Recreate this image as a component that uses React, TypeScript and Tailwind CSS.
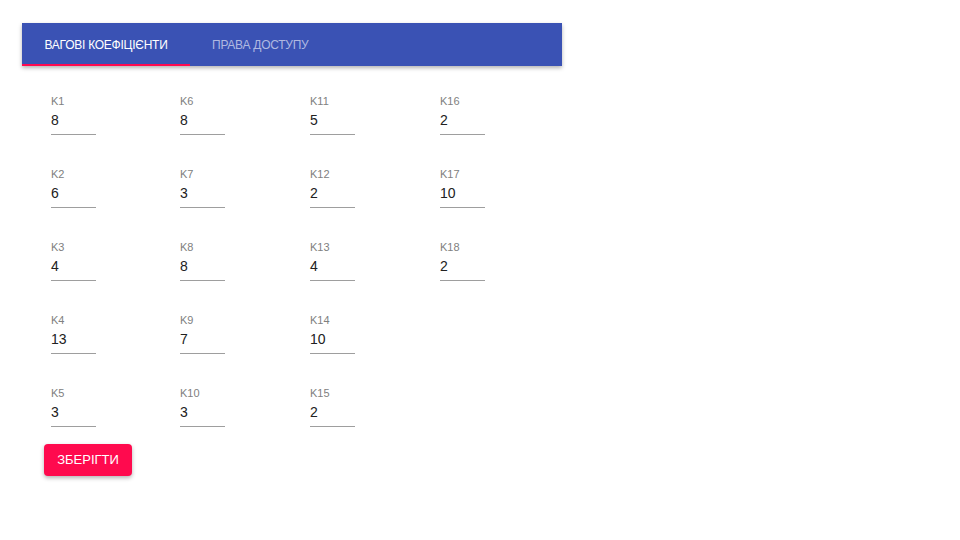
import React from 'react'

const fields: { label: string; value: string }[] = [
    { label: 'K1', value: '8' },
    { label: 'K2', value: '6' },
    { label: 'K3', value: '4' },
    { label: 'K4', value: '13' },
    { label: 'K5', value: '3' },
    { label: 'K6', value: '8' },
    { label: 'K7', value: '3' },
    { label: 'K8', value: '8' },
    { label: 'K9', value: '7' },
    { label: 'K10', value: '3' },
    { label: 'K11', value: '5' },
    { label: 'K12', value: '2' },
    { label: 'K13', value: '4' },
    { label: 'K14', value: '10' },
    { label: 'K15', value: '2' },
    { label: 'K16', value: '2' },
    { label: 'K17', value: '10' },
    { label: 'K18', value: '2' },
]

function Field({ label, value }: { label: string; value: string }) {
    return (
        <div className="flex flex-col w-[45px] h-[41px]">
            <span className="text-[11px] leading-[14px] text-[#808080]">{label}</span>
            <div className="mt-[3px] pb-[5px] border-b border-[#9e9e9e] text-[14px] leading-[18px] text-[#212121]">
                {value}
            </div>
        </div>
    )
}

export default function App() {
    return (
        <main className="min-h-screen bg-white font-['Liberation_Sans',Arial,sans-serif] pt-[23px] pl-[22px]">
            <div className="w-[540px]">
                <nav className="flex flex-row h-[43px] bg-[#3a52b4] shadow-[0_2px_4px_rgba(0,0,0,0.3)]">
                    <button className="relative w-[168px] flex items-center justify-center text-[12px] tracking-[-0.25px] text-white uppercase">
                        Вагові коефіцієнти
                        <span className="absolute left-0 right-0 bottom-0 h-[2px] bg-[#ff0a50]" />
                    </button>
                    <button className="px-[22px] flex items-center text-[12px] tracking-[-0.25px] text-[#b0b9e1] uppercase">
                        Права доступу
                    </button>
                </nav>

                <section className="pl-[29px] pt-[28px]">
                    <div className="grid grid-flow-col grid-rows-5 grid-cols-[129px_130px_130px_130px] gap-y-[32px]">
                        {fields.map((f) => (
                            <Field key={f.label} label={f.label} value={f.value} />
                        ))}
                    </div>
                </section>

                <div className="pl-[22px] mt-[17px]">
                    <button className="w-[88px] h-[32px] rounded-[4px] bg-[#ff0a4e] text-white text-[13px] uppercase shadow-[0_2px_4px_rgba(0,0,0,0.3)]">
                        Зберігти
                    </button>
                </div>
            </div>
        </main>
    )
}
